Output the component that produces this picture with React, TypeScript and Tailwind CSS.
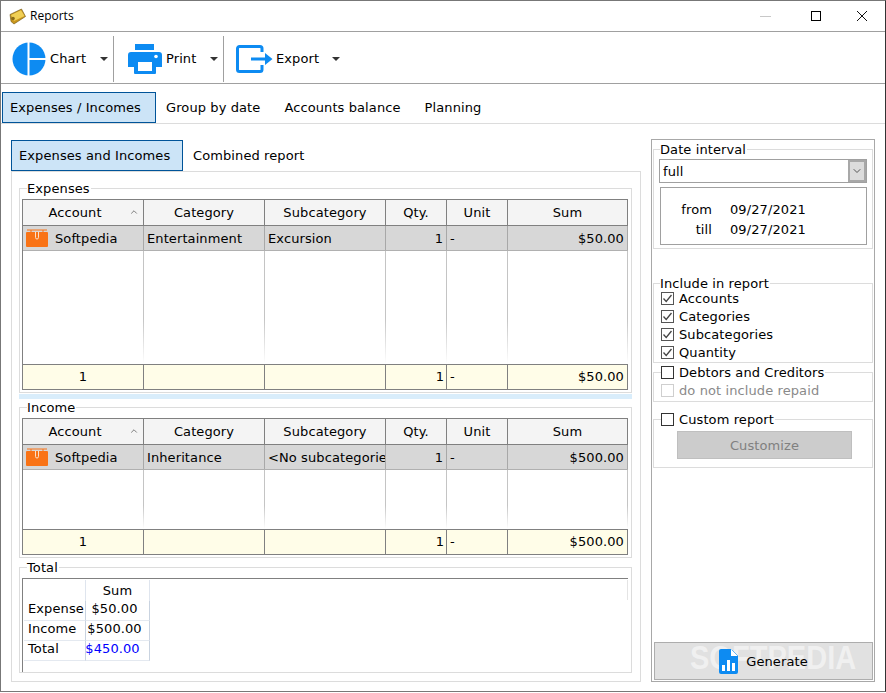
import React from "react";
import { ChevronDown, ChevronUp } from "lucide-react";

const columns = [
  { name: "Account", width: "w-[121px]" },
  { name: "Category", width: "w-[121px]" },
  { name: "Subcategory", width: "w-[121px]" },
  { name: "Qty.", width: "w-[61px]" },
  { name: "Unit", width: "w-[61px]" },
  { name: "Sum", width: "w-[120px]" },
];

const Caret = () => <span className="block w-0 h-0 border-x-[4px] border-x-transparent border-t-[4px] border-t-[#333]" />;

const ChartIcon = () => (
  <svg width="34" height="34" viewBox="0 0 34 34" className="shrink-0">
    <circle cx="17" cy="17" r="16.5" fill="#0d8bf2" />
    <path d="M16.5 0V34M16.5 17H34" stroke="#fff" strokeWidth="2" fill="none" />
  </svg>
);

const PrintIcon = () => (
  <svg width="34" height="30" viewBox="0 0 34 30" className="shrink-0">
    <rect x="7" y="0" width="19" height="6" fill="#0d8bf2" />
    <path d="M3 8H31a3 3 0 0 1 3 3V23H28V29a1 1 0 0 1-1 1H7a1 1 0 0 1-1-1V23H0V11a3 3 0 0 1 3-3Z" fill="#0d8bf2" />
    <rect x="10" y="18" width="14" height="9" fill="#fff" />
    <circle cx="28" cy="12.5" r="1.8" fill="#fff" />
  </svg>
);

const ExportIcon = () => (
  <svg width="37" height="28" viewBox="0 0 37 28" className="shrink-0">
    <path d="M26 7V3.5A2 2 0 0 0 24 1.5H3.5A2 2 0 0 0 1.5 3.5V24.5A2 2 0 0 0 3.5 26.5H24A2 2 0 0 0 26 24.5V20" stroke="#0d8bf2" strokeWidth="3" fill="none" />
    <path d="M15 12.5H29V8L36.5 14L29 20V15.5H15Z" fill="#0d8bf2" />
  </svg>
);

const WalletIcon = () => (
  <svg width="17" height="17" viewBox="0 0 17 17" className="shrink-0">
    <path d="M1 6.5L12.5 1L16.5 8.5L5 16L2 13.5Z" fill="#c9961c" stroke="#6b5210" strokeWidth="0.6" />
    <path d="M2 7L12 2.2L15.5 8L5 13Z" fill="#f0cf55" />
    <circle cx="4" cy="10.5" r="1.8" fill="#8a6a18" />
  </svg>
);

const CaseIcon = () => (
  <svg width="22" height="18" viewBox="0 0 22 18" className="shrink-0">
    <rect x="0" y="3" width="22" height="15" fill="#f97316" rx="1" />
    <path d="M1 1H21" stroke="#f97316" strokeWidth="1" />
    <path d="M5 1V3M17 1V3" stroke="#f97316" strokeWidth="1" />
    <path d="M9.5 3V8.5a1.5 1.5 0 0 0 3 0V3" stroke="#fde0c8" strokeWidth="1" fill="none" />
  </svg>
);

const ReportIcon = () => (
  <svg width="20" height="25" viewBox="0 0 20 25" className="shrink-0">
    <path d="M2 0H12L19 7V23a2 2 0 0 1-2 2H2a2 2 0 0 1-2-2V2a2 2 0 0 1 2-2Z" fill="#0d8bf2" />
    <path d="M12 0V7H19Z" fill="#fff" />
    <path d="M13 1L19 7" stroke="#0d8bf2" strokeWidth="0.5" />
    <rect x="3" y="16" width="3" height="6" fill="#fff" />
    <rect x="8" y="11" width="3" height="11" fill="#fff" />
    <rect x="13" y="14" width="3" height="8" fill="#fff" />
  </svg>
);

const Group = ({ title, legendClass, className, children }: { title: React.ReactNode; legendClass?: string; className?: string; children: React.ReactNode }) => (
  <fieldset className={`min-w-0 border border-[#dcdcdc] ${className ?? ""}`}>
    <legend className={`pr-[1px] ${legendClass ?? ""}`}>
      {typeof title === "string" ? <span className="block h-4 leading-[18px]">{title}</span> : title}
    </legend>
    {children}
  </fieldset>
);

const Check = ({ checked, disabled, label }: { checked?: boolean; disabled?: boolean; label: string }) => (
  <div className={`flex items-center h-[18px] gap-[5px] ${disabled ? "text-[#8a8a8a]" : ""}`}>
    <span className={`w-[13px] h-[13px] border flex items-center justify-center bg-white ${disabled ? "border-[#cfcfcf]" : checked ? "border-[#555]" : "border-[#333]"}`}>
      {checked && (
        <svg width="11" height="11" viewBox="0 0 11 11">
          <path d="M1.5 5.5L4.2 8.5L9.5 2" stroke="#444" strokeWidth="1.3" fill="none" />
        </svg>
      )}
    </span>
    <span className="pt-[2px]">{label}</span>
  </div>
);

const ReportGrid = ({ cells, totals, emptyHeight }: { cells: string[]; totals: string[]; emptyHeight: string }) => (
  <div className="w-[606px] border-l border-t border-[#808080]">
    <div className="flex h-[26px] bg-[#f4f4f4] border-b border-[#808080]">
      {columns.map((col, i) => (
        <div key={col.name} className={`${col.width} relative flex items-center justify-center border-r border-[#808080] ${i === 0 ? "pr-[16px]" : ""}`}>
          {col.name}
          {i === 0 && <ChevronUp size={10} className="absolute right-[4px] top-[7px] text-[#666]" />}
        </div>
      ))}
    </div>
    <div className="flex h-[25px] bg-[#d7d7d7] border-b border-[#b0b0b0]">
      {cells.map((text, i) => (
        <div
          key={i}
          className={`${columns[i].width} flex items-center pt-[2px] overflow-hidden whitespace-nowrap border-r border-[#a8a8a8] ${i === 3 || i === 5 ? "justify-end pr-[3px]" : "pl-[3px]"}`}
        >
          {i === 0 && <span className="mr-[7px] -mt-[2px]"><CaseIcon /></span>}
          {text}
        </div>
      ))}
    </div>
    <div className={`flex ${emptyHeight}`}>
      {columns.map((col) => (
        <div key={col.name} className={`${col.width} flex justify-end`}>
          <div className="w-px h-full bg-gradient-to-b from-[#c4c4c4] from-60% to-white" />
        </div>
      ))}
    </div>
    <div className="flex h-[26px] bg-[#fffde8] border-y border-[#808080]">
      {totals.map((text, i) => (
        <div
          key={i}
          className={`${columns[i].width} flex items-center border-r border-[#808080] ${i === 0 ? "justify-center" : i === 3 ? "justify-end pr-[2px]" : i === 5 ? "justify-end pr-[3px]" : "pl-[3px]"}`}
        >
          {text}
        </div>
      ))}
    </div>
  </div>
);

const TotalRow = ({ label, value, valueClass }: { label: string; value: string; valueClass: string }) => (
  <div className="flex h-5 ml-px">
    <div className="w-[62px] pl-[4px] pb-[4px] flex items-center border-r border-b border-r-[#c9d3e0] border-b-[#e4e9f0]">{label}</div>
    <div className={`w-[64px] pb-[4px] flex items-center justify-center border-r border-b border-r-[#c9d3e0] border-b-[#e4e9f0] whitespace-nowrap ${valueClass}`}>{value}</div>
  </div>
);

export default function App() {
  return (
    <div className="w-[886px] h-[693px] bg-white overflow-hidden text-black text-[13px] tracking-[0.1px] [font-family:'DejaVu_Sans',sans-serif]">
      <div className="h-[692px] flex flex-col border border-[#777] border-r-[#333]">
        {/* title bar */}
        <div className="h-[30px] shrink-0 flex items-center pl-[8px] tracking-normal text-[12px] [font-family:'Open_Sans',sans-serif]">
          <WalletIcon />
          <span className="ml-[4px]">Reports</span>
          <div className="ml-auto flex items-center">
            <span className="w-[11px] h-px bg-[#c8c8c8] mr-[40px]" />
            <span className="w-[10px] h-[10px] border border-black mr-[35px]" />
            <svg width="12" height="12" viewBox="0 0 12 12" className="mr-[17px]">
              <path d="M1 1L11 11M11 1L1 11" stroke="#111" strokeWidth="1" />
            </svg>
          </div>
        </div>

        {/* toolbar */}
        <div className="h-[53px] shrink-0 flex items-center pt-[2px] border-y border-[#a0a0a0]">
          <div className="w-[113px] h-[46px] flex items-center pl-[11px] border-r border-[#a0a0a0]">
            <ChartIcon />
            <span className="ml-[4px] w-[50px]">Chart</span>
            <Caret />
          </div>
          <div className="w-[110px] h-[46px] flex items-center pl-[14px] border-r border-[#a0a0a0]">
            <PrintIcon />
            <span className="ml-[4px] w-[44px]">Print</span>
            <Caret />
          </div>
          <div className="h-[46px] flex items-center pl-[12px]">
            <ExportIcon />
            <span className="ml-[3px] w-[56px]">Export</span>
            <Caret />
          </div>
        </div>

        {/* main tabs */}
        <div className="h-[40px] shrink-0 flex items-start pt-[8px] pl-[1px] border-b border-[#dcdcdc]">
          <div className="w-[154px] h-[31px] flex items-center pl-[7px] bg-[#cce4f7] border border-[#005499]">Expenses / Incomes</div>
          <div className="h-[31px] flex items-center ml-[10px]">Group by date</div>
          <div className="h-[31px] flex items-center ml-[24px]">Accounts balance</div>
          <div className="h-[31px] flex items-center ml-[24px]">Planning</div>
        </div>

        <div className="flex-1 min-h-0 flex pt-[16px] pl-[10px]">
          {/* left side */}
          <div className="w-[630px] shrink-0 flex flex-col">
            <div className="flex h-[31px] shrink-0">
              <div className="w-[172px] flex items-center pl-[7px] bg-[#cce4f7] border border-[#005499]">Expenses and Incomes</div>
              <div className="flex items-center ml-[10px]">Combined report</div>
            </div>
            <div className="h-[511px] border border-[#dcdcdc] pl-[7px] pt-[8px]">
              <Group title="Expenses" legendClass="ml-[5px]" className="w-[613px] pl-[2px] pr-[3px] pt-[3px] pb-[2px]">
                <ReportGrid
                  cells={["Softpedia", "Entertainment", "Excursion", "1", "-", "$50.00"]}
                  totals={["1", "", "", "1", "-", "$50.00"]}
                  emptyHeight="h-[113px]"
                />
              </Group>
              <div className="w-[613px] h-[5px] mt-px bg-[#d9edfb]" />
              <Group title="Income" legendClass="ml-[5px]" className="w-[613px] pl-[2px] pr-[3px] pt-[3px] pb-[2px]">
                <ReportGrid
                  cells={["Softpedia", "Inheritance", "<No subcategories>", "1", "-", "$500.00"]}
                  totals={["1", "", "", "1", "-", "$500.00"]}
                  emptyHeight="h-[59px]"
                />
              </Group>
              <Group title="Total" legendClass="ml-[5px]" className="w-[613px] mt-px pl-[2px] pr-[3px] pt-[3px]">
                <div className="h-[94px] border-t border-l border-[#808080] pt-px">
                  <div className="flex">
                    <div className="flex-1">
                      <div className="flex h-[21px] ml-px">
                        <div className="w-[62px] border-r border-[#dfe5ee]" />
                        <div className="w-[64px] flex items-center justify-center border-r border-[#dfe5ee]">Sum</div>
                      </div>
                      <TotalRow label="Expense" value="$50.00" valueClass="pr-[6px]" />
                      <TotalRow label="Income" value="$500.00" valueClass="pr-[6px]" />
                      <TotalRow label="Total" value="$450.00" valueClass="pr-[10px] text-[#0000ff]" />
                    </div>
                    <div className="w-px h-[20px] bg-[#e4e4e4]" />
                  </div>
                </div>
              </Group>
            </div>
          </div>

          {/* right side */}
          <div className="w-[224px] h-[543px] -mt-px ml-[10px] shrink-0 flex flex-col border border-[#a8a8a8] pl-px pt-px">
            <Group title="Date interval" legendClass="ml-px" className="w-[220px] h-[108px] px-[5px] pt-[2px]">
              <div className="h-[24px] flex border border-[#a0a0a0]">
                <div className="flex-1 pl-[3px] pt-[2px] flex items-center">full</div>
                <div className="w-[18px] flex items-center justify-center bg-[#dcdcdc] border-2 border-[#a8a8a8]">
                  <ChevronDown size={12} className="text-[#555]" />
                </div>
              </div>
              <div className="h-[58px] mt-[4px] ml-px border border-[#a0a0a0] pt-[12px]">
                <div className="flex h-5 items-center">
                  <span className="w-[51px] text-right">from</span>
                  <span className="ml-[18px]">09/27/2021</span>
                </div>
                <div className="flex h-5 items-center">
                  <span className="w-[51px] text-right">till</span>
                  <span className="ml-[18px]">09/27/2021</span>
                </div>
              </div>
            </Group>
            <Group title="Include in report" legendClass="-ml-px" className="w-[220px] h-[88px] mt-[26px] px-[7px]">
              <div className="-mt-[2px]">
                <Check checked label="Accounts" />
                <Check checked label="Categories" />
                <Check checked label="Subcategories" />
                <Check checked label="Quantity" />
              </div>
            </Group>
            <Group title={<Check label="Debtors and Creditors" />} className="w-[220px] h-[39px] px-[7px]">
              <Check disabled label="do not include repaid" />
            </Group>
            <Group title={<Check label="Custom report" />} className="w-[220px] h-[58px] mt-[8px] px-[7px]">
              <div className="w-[175px] h-[28px] mt-[3px] ml-[16px] pt-[2px] flex items-center justify-center bg-[#cccccc] border border-[#bfbfbf] text-[#808080]">Customize</div>
            </Group>
            <div className="relative mt-auto mb-px ml-px w-[219px] h-[38px] flex items-center justify-center gap-[7px] bg-[#e1e1e1] border border-[#adadad] overflow-hidden">
              <span className="absolute left-[35px] top-0 origin-left scale-x-[0.88] text-[33px] leading-[30px] font-bold text-white/50 whitespace-nowrap tracking-normal [font-family:'Liberation_Sans',sans-serif]">SOFTPEDIA</span>
              <span className="relative flex items-center gap-[7px]">
                <ReportIcon />
                <span className="pt-[2px]">Generate</span>
              </span>
            </div>
          </div>
        </div>
      </div>
    </div>
  );
}
